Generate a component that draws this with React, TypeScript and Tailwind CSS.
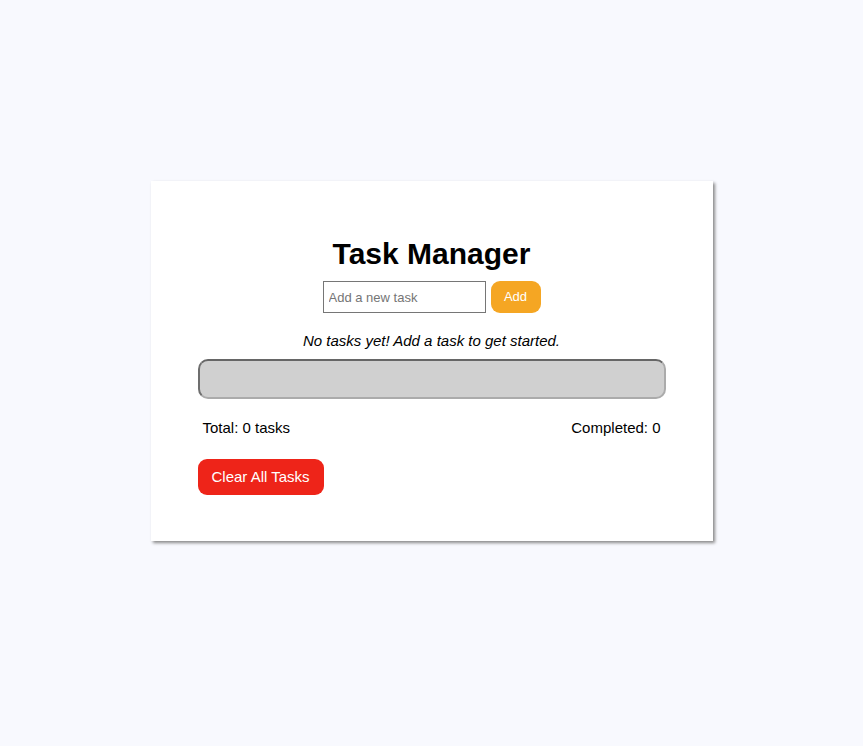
import React from "react";

export default function App() {
  return (
    <div
      className="min-h-[746px] w-full bg-[#f8f9fe] pt-[181px]"
      style={{ fontFamily: '"Liberation Sans", Arial, sans-serif' }}
    >
      <div className="mx-auto h-[360px] w-[562px] bg-white px-[47px] pt-[55px] shadow-[2px_2px_3px_#8a8a8a]">
        <h1 className="text-center text-[30px] font-bold leading-[35px] text-black">
          Task Manager
        </h1>
        <div className="mt-[10px] flex justify-center gap-[5px]">
          <input
            type="text"
            placeholder="Add a new task"
            className="h-[32px] w-[163px] border border-[#767676] bg-white px-[5px] text-[13px] text-black outline-none placeholder:text-[#757575]"
          />
          <button className="h-[32px] w-[50px] rounded-[9px] bg-[#f5a623] text-[13px] text-white">
            Add
          </button>
        </div>
        <p className="mt-[19px] text-center text-[15px] italic leading-[17px] text-black">
          No tasks yet! Add a task to get started.
        </p>
        <div className="mt-[10px] h-[40px] w-full rounded-[10px] border-2 border-t-[#666666] border-l-[#6e6e6e] border-b-[#ababab] border-r-[#ababab] bg-[#d0d0d0]" />
        <div className="mt-[20px] flex justify-between px-[5px] text-[15px] leading-[17px] text-black">
          <span>Total: 0 tasks</span>
          <span>Completed: 0</span>
        </div>
        <button className="mt-[23px] h-[36px] rounded-[9px] bg-[#ee2419] px-[14px] text-[15px] text-white">
          Clear All Tasks
        </button>
      </div>
    </div>
  );
}
